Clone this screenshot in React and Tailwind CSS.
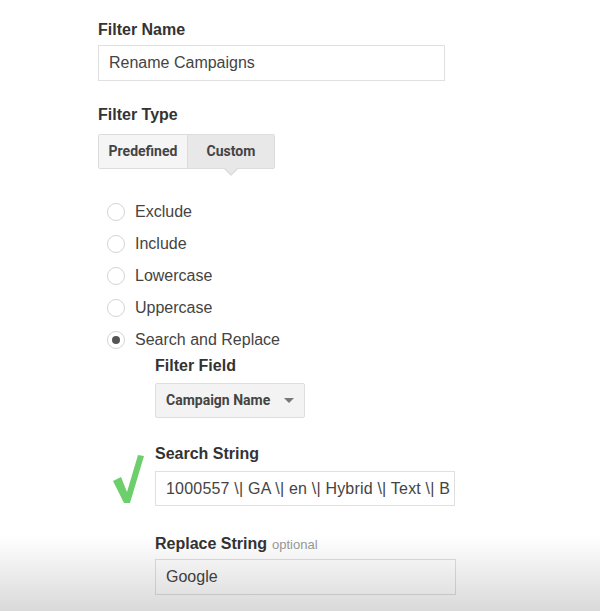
import React from "react";

const SANS = { fontFamily: '"Liberation Sans", Arial, sans-serif' };
const ROBOTO = { fontFamily: 'Roboto, "Liberation Sans", sans-serif' };

const Label = ({ children, className = "" }) => (
  <div
    className={`text-[16px] leading-5 font-bold text-[#333] ${className}`}
    style={SANS}
  >
    {children}
  </div>
);

const Radio = ({ label, checked }) => (
  <div className="flex items-center h-8 gap-[10px]">
    <div className="w-[18px] h-[18px] rounded-full border border-[#d4d4d4] bg-white flex items-center justify-center">
      {checked && <div className="w-2 h-2 rounded-full bg-[#555]" />}
    </div>
    <span className="text-[16px] text-[#444]" style={SANS}>
      {label}
    </span>
  </div>
);

const CheckMark = () => (
  <svg
    width="34"
    height="54"
    viewBox="0 0 34 54"
    className="absolute left-[111px] top-[452px]"
  >
    <path
      d="M2 29 L10 25 L16 40 L27 3 L33 4 L19 51 L13 51 Z"
      fill="#6ccf6c"
    />
  </svg>
);

export default function App() {
  return (
    <div className="relative w-[600px] h-[611px] bg-white overflow-hidden">
      <div className="pl-[98px] pt-5">
        <Label>Filter Name</Label>
        <div
          className="mt-[5px] w-[347px] h-[36px] border border-[#e0e0e0] flex items-center px-[10px] text-[16px] text-[#444]"
          style={SANS}
        >
          Rename Campaigns
        </div>

        <Label className="mt-6">Filter Type</Label>
        <div className="mt-[9px] relative flex w-[177px] h-[35px] border border-[#dcdcdc] rounded-[2px] text-[14px] font-bold text-[#444]" style={ROBOTO}>
          <div className="w-[88px] flex items-center justify-center bg-[#f5f5f5]">
            Predefined
          </div>
          <div className="flex-1 flex items-center justify-center bg-[#e8e8e8] border-l border-[#dcdcdc]">
            Custom
          </div>
          <div className="absolute left-[124px] top-[33px] w-0 h-0 border-l-[8px] border-r-[8px] border-t-[8px] border-l-transparent border-r-transparent border-t-[#dcdcdc]" />
          <div className="absolute left-[125px] top-[32px] w-0 h-0 border-l-[7px] border-r-[7px] border-t-[7px] border-l-transparent border-r-transparent border-t-[#e8e8e8]" />
        </div>

        <div className="mt-[27px] pl-[9px]">
          <Radio label="Exclude" />
          <Radio label="Include" />
          <Radio label="Lowercase" />
          <Radio label="Uppercase" />
          <Radio label="Search and Replace" checked />
        </div>

        <div className="pl-[57px]">
          <Label>Filter Field</Label>
          <div
            className="mt-[7px] w-[150px] h-[35px] border border-[#dedede] bg-[#f3f3f3] rounded-[2px] flex items-center justify-between pl-[10px] pr-[10px] text-[14px] font-bold text-[#444]"
            style={ROBOTO}
          >
            <span>Campaign Name</span>
            <span className="w-0 h-0 border-l-[5px] border-r-[5px] border-t-[5px] border-l-transparent border-r-transparent border-t-[#777]" />
          </div>

          <Label className="mt-[26px]">Search String</Label>
          <div
            className="mt-[7px] w-[300px] h-[35px] border border-[#e0e0e0] flex items-center px-[10px] text-[16px] text-[#444] whitespace-nowrap overflow-hidden tracking-[0.2px]"
            style={SANS}
          >
            1000557 \| GA \| en \| Hybrid \| Text \| B
          </div>

          <div className="mt-[28px] flex items-baseline gap-[5px]" style={SANS}>
            <span className="text-[16px] leading-5 font-bold text-[#333]">Replace String</span>
            <span className="text-[13px] text-[#999]">optional</span>
          </div>
          <div
            className="mt-[4px] w-[301px] h-[36px] border border-[#e0e0e0] flex items-center px-[10px] text-[16px] text-[#444]"
            style={SANS}
          >
            Google
          </div>
        </div>
      </div>

      <CheckMark />

      <div className="absolute inset-x-0 bottom-0 h-[75px] bg-gradient-to-b from-transparent to-black/15 pointer-events-none" />
    </div>
  );
}
